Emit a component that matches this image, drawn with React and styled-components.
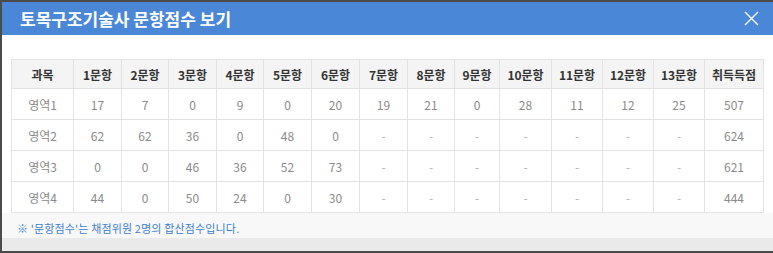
import React from "react";
import styled, { createGlobalStyle } from "styled-components";

const GlobalStyle = createGlobalStyle`
  html, body { margin: 0; padding: 0; }
  body {
    background: #4b4b4b;
    font-family: "Noto Sans CJK KR", "Noto Sans", sans-serif;
  }
`;

const Frame = styled.div`
  width: 773px;
  height: 253px;
  box-sizing: border-box;
  padding: 2px 0 2px 2px;
  overflow: hidden;
`;

const Modal = styled.div`
  height: 100%;
  display: flex;
  flex-direction: column;
  background: #ffffff;
`;

const Header = styled.header`
  height: 33px;
  flex: none;
  background: #4a87d6;
  display: flex;
  align-items: center;
  justify-content: space-between;
  padding: 0 14px 0 18px;
`;

const Title = styled.h2`
  margin: 0;
  color: #ffffff;
  font-size: 17px;
  font-weight: 700;
  letter-spacing: 0;
  line-height: 1;
`;

const Close = styled.button`
  border: 0;
  background: none;
  padding: 0;
  width: 16px;
  height: 16px;
  display: flex;
  align-items: center;
  justify-content: center;
  cursor: pointer;
`;

const Body = styled.div`
  padding: 24px 10px 0 9px;
  background: #ffffff;
`;

const Table = styled.table`
  width: 752px;
  border-collapse: collapse;
  table-layout: fixed;
  font-size: 12px;
`;

const Th = styled.th`
  height: 28px;
  padding: 0;
  background: #f4f4f4;
  border: 1px solid #e3e3e3;
  color: #333;
  font-weight: 700;
  text-align: center;
`;

const Td = styled.td`
  height: 30px;
  padding: 0;
  border: 1px solid #e3e3e3;
  color: ${(p) => (p.$dash ? "#b0b0b0" : "#8a8a8a")};
  font-weight: 400;
  text-align: center;
`;

const Note = styled.p`
  margin: 0;
  flex: 1;
  background: #f8f8f8;
  padding: 8px 0 0 15px;
  color: #3f7fcf;
  font-size: 11px;
  letter-spacing: 0.15px;
  line-height: 14px;
`;

const Footer = styled.div`
  height: 13px;
  flex: none;
  background: #eaeaea;
`;

const widths = [62, 48, 47, 48, 47, 48, 48, 48, 47, 45, 52, 51, 51, 51, 59];
const headers = [
  "과목",
  ...Array.from({ length: 13 }, (_, i) => `${i + 1}문항`),
  "취득득점",
];

const rows = [
  ["영역1", "17", "7", "0", "9", "0", "20", "19", "21", "0", "28", "11", "12", "25", "507"],
  ["영역2", "62", "62", "36", "0", "48", "0", "-", "-", "-", "-", "-", "-", "-", "624"],
  ["영역3", "0", "0", "46", "36", "52", "73", "-", "-", "-", "-", "-", "-", "-", "621"],
  ["영역4", "44", "0", "50", "24", "0", "30", "-", "-", "-", "-", "-", "-", "-", "444"],
];

export default function App() {
  return (
    <>
      <GlobalStyle />
      <Frame>
        <Modal>
          <Header>
            <Title>토목구조기술사 문항점수 보기</Title>
            <Close aria-label="닫기">
              <svg width="15" height="15" viewBox="0 0 15 15">
                <path d="M1 1 L14 14 M14 1 L1 14" stroke="#fff" strokeWidth="1.4" fill="none" />
              </svg>
            </Close>
          </Header>
          <Body>
            <Table>
              <colgroup>
                {widths.map((w, i) => (
                  <col key={i} style={{ width: w }} />
                ))}
              </colgroup>
              <thead>
                <tr>
                  {headers.map((h) => (
                    <Th key={h}>{h}</Th>
                  ))}
                </tr>
              </thead>
              <tbody>
                {rows.map((r) => (
                  <tr key={r[0]}>
                    {r.map((c, i) => (
                      <Td key={i} $dash={c === "-"}>{c}</Td>
                    ))}
                  </tr>
                ))}
              </tbody>
            </Table>
          </Body>
          <Note>※ '문항점수'는 채점위원 2명의 합산점수입니다.</Note>
          <Footer />
        </Modal>
      </Frame>
    </>
  );
}
